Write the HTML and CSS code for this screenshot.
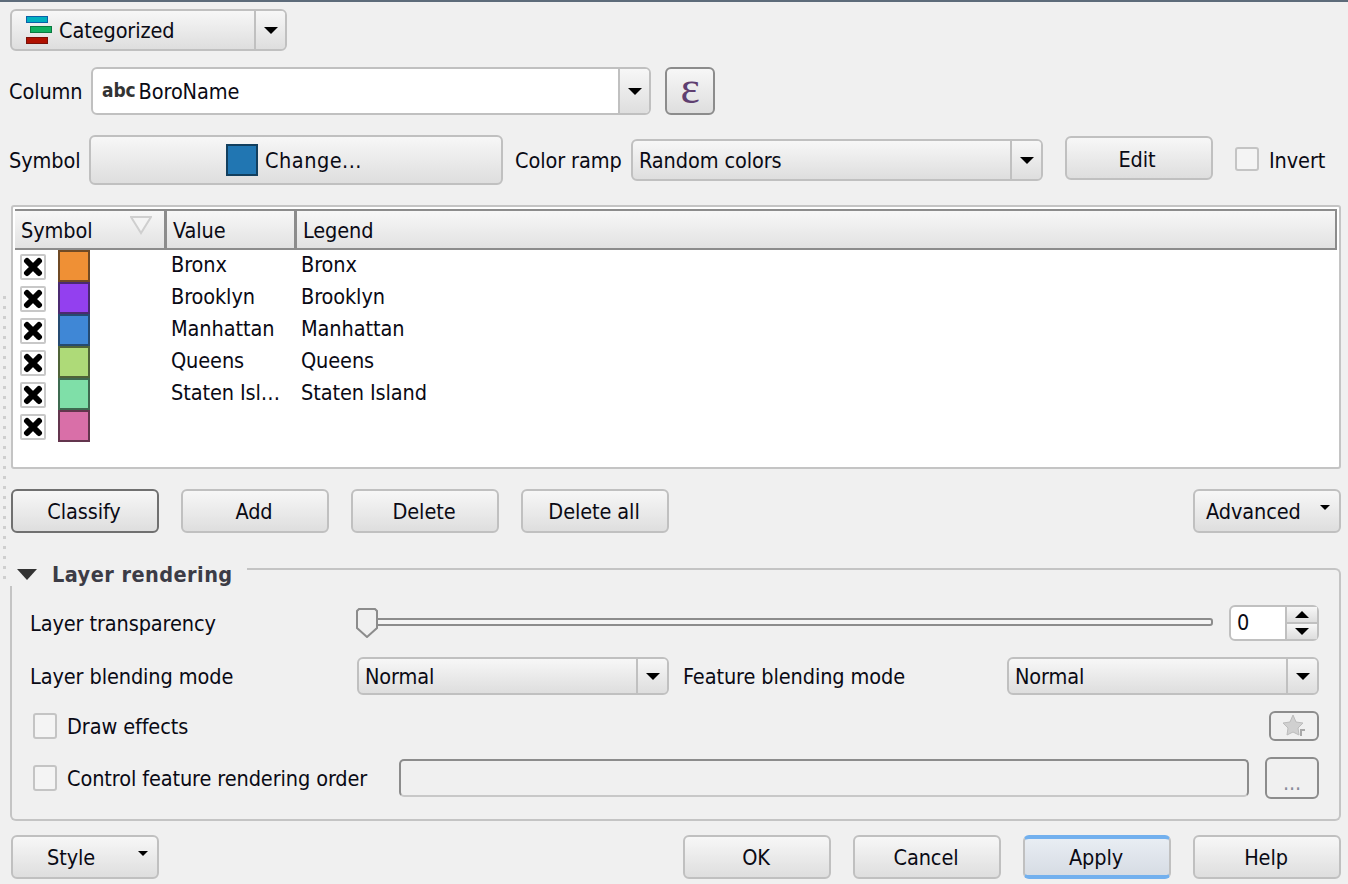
FILE: index.html
```html
<!DOCTYPE html>
<html lang="en">
<head>
<meta charset="UTF-8" />
<title>Layer Properties</title>
<link rel="stylesheet" href="styles.css">
</head>
<body>

<div class="splitter"></div>

<div class="row row-renderer">
  <div class="combo combo-renderer">
    <span class="combo-text">
      <svg class="renderer-icon" width="26" height="28" viewBox="0 0 26 28">
        <rect x="0.5" y="0.5" width="21" height="6" fill="#00b0c0" stroke="#0a5fa8"/>
        <rect x="4.5" y="10.5" width="21" height="6" fill="#10b060" stroke="#0a7a40"/>
        <rect x="0.5" y="21.5" width="21" height="6" fill="#b01000" stroke="#7a1008"/>
      </svg>
      Categorized
    </span>
    <span class="combo-arrow"><i class="arrow"></i></span>
  </div>
</div>

<div class="row row-column">
  <label class="lbl lbl-column">Column</label>
  <div class="combo combo-white combo-column">
    <span class="combo-text"><b class="abc">abc</b> BoroName</span>
    <span class="combo-arrow"><i class="arrow"></i></span>
  </div>
  <button class="btn btn-eps"><span>ε</span></button>
</div>

<div class="row row-symbol">
  <label class="lbl lbl-symbol">Symbol</label>
  <button class="btn btn-change"><i class="swatch-blue"></i>Change...</button>
  <label class="lbl lbl-ramp">Color ramp</label>
  <div class="combo combo-ramp">
    <span class="combo-text">Random colors</span>
    <span class="combo-arrow"><i class="arrow"></i></span>
  </div>
  <button class="btn btn-edit">Edit</button>
  <i class="check check-invert"></i>
  <label class="lbl lbl-invert">Invert</label>
</div>

<div class="table">
  <div class="table-head">
    <div class="th th-symbol">Symbol
      <svg class="sort" width="22" height="20" viewBox="0 0 22 20"><path d="M1 2H21L11 18Z" fill="#f4f4f4" stroke="#cfcfcf" stroke-width="2"/></svg>
    </div>
    <div class="th">Value</div>
    <div class="th th-last">Legend</div>
  </div>
  <div class="tr">
    <div class="td-sym"><span class="tick"><svg width="20" height="20" viewBox="0 0 20 20"><path d="M4 4L16 16M16 4L4 16" stroke="#000" stroke-width="6" stroke-linecap="round"/></svg></span><i class="swatch c-orange"></i></div>
    <div class="td">Bronx</div><div class="td">Bronx</div>
  </div>
  <div class="tr">
    <div class="td-sym"><span class="tick"><svg width="20" height="20" viewBox="0 0 20 20"><path d="M4 4L16 16M16 4L4 16" stroke="#000" stroke-width="6" stroke-linecap="round"/></svg></span><i class="swatch c-purple"></i></div>
    <div class="td">Brooklyn</div><div class="td">Brooklyn</div>
  </div>
  <div class="tr">
    <div class="td-sym"><span class="tick"><svg width="20" height="20" viewBox="0 0 20 20"><path d="M4 4L16 16M16 4L4 16" stroke="#000" stroke-width="6" stroke-linecap="round"/></svg></span><i class="swatch c-blue"></i></div>
    <div class="td">Manhattan</div><div class="td">Manhattan</div>
  </div>
  <div class="tr">
    <div class="td-sym"><span class="tick"><svg width="20" height="20" viewBox="0 0 20 20"><path d="M4 4L16 16M16 4L4 16" stroke="#000" stroke-width="6" stroke-linecap="round"/></svg></span><i class="swatch c-green"></i></div>
    <div class="td">Queens</div><div class="td">Queens</div>
  </div>
  <div class="tr">
    <div class="td-sym"><span class="tick"><svg width="20" height="20" viewBox="0 0 20 20"><path d="M4 4L16 16M16 4L4 16" stroke="#000" stroke-width="6" stroke-linecap="round"/></svg></span><i class="swatch c-teal"></i></div>
    <div class="td">Staten Isl…</div><div class="td">Staten Island</div>
  </div>
  <div class="tr">
    <div class="td-sym"><span class="tick"><svg width="20" height="20" viewBox="0 0 20 20"><path d="M4 4L16 16M16 4L4 16" stroke="#000" stroke-width="6" stroke-linecap="round"/></svg></span><i class="swatch c-pink"></i></div>
    <div class="td"></div><div class="td"></div>
  </div>
</div>

<div class="row row-actions">
  <button class="btn btn-wide btn-default">Classify</button>
  <button class="btn btn-wide">Add</button>
  <button class="btn btn-wide">Delete</button>
  <button class="btn btn-wide">Delete all</button>
  <button class="btn btn-wide btn-menu push-right">Advanced<i class="arrow arrow-small"></i></button>
</div>

<div class="group-title">
  <i class="arrow arrow-group"></i>
  <span class="group-name">Layer rendering</span>
  <span class="group-line"></span>
</div>
<div class="group-body">
  <div class="row row-slider">
    <label class="lbl lbl-group">Layer transparency</label>
    <div class="slider">
      <svg class="slider-handle" width="22" height="30" viewBox="0 0 22 30"><path d="M3 1H19L21 3V20L11 29L1 20V3Z" fill="#f0f0f0" stroke="#8c8c8c" stroke-width="2"/></svg>
    </div>
    <div class="spin">
      <span class="spin-value">0</span>
      <span class="spin-btns">
        <span class="spin-btn"><i class="arrow arrow-up"></i></span>
        <span class="spin-btn"><i class="arrow"></i></span>
      </span>
    </div>
  </div>
  <div class="row row-blend">
    <label class="lbl lbl-group">Layer blending mode</label>
    <div class="combo combo-blend">
      <span class="combo-text">Normal</span>
      <span class="combo-arrow"><i class="arrow"></i></span>
    </div>
    <label class="lbl lbl-feature">Feature blending mode</label>
    <div class="combo combo-blend">
      <span class="combo-text">Normal</span>
      <span class="combo-arrow"><i class="arrow"></i></span>
    </div>
  </div>
  <div class="row row-effects">
    <i class="check check-group"></i>
    <label class="lbl">Draw effects</label>
    <button class="btn btn-star push-right">
      <svg width="26" height="24" viewBox="0 0 26 24"><path d="M12 1L15 8L22 9L17 14L18 21L12 18L6 21L7 14L2 9L9 8Z" fill="#d0d0d0" stroke="#bcbcbc"/><path d="M20 22V16H24" fill="none" stroke="#a8a8a8" stroke-width="2"/></svg>
    </button>
  </div>
  <div class="row row-order">
    <i class="check check-group"></i>
    <label class="lbl lbl-order">Control feature rendering order</label>
    <div class="order-input"></div>
    <button class="btn btn-more"><span>...</span></button>
  </div>
</div>

<div class="row row-footer">
  <button class="btn btn-wide btn-menu btn-style">Style<i class="arrow arrow-small"></i></button>
  <button class="btn btn-wide push-right">OK</button>
  <button class="btn btn-wide">Cancel</button>
  <button class="btn btn-wide btn-apply">Apply</button>
  <button class="btn btn-wide">Help</button>
</div>

</body>
</html>
```

FILE: styles.css
```css
* {
  box-sizing: border-box;
}
html, body {
  height: 100%;
}
body {
  margin: 0;
  position: relative;
  overflow: hidden;
  background: #f0f0f0;
  border-top: 2px solid #5d6b7a;
  color: #0a0a14;
  font-family: "DejaVu Sans Condensed", "DejaVu Sans", sans-serif;
  font-stretch: condensed;
  font-size: 21.5px;
  letter-spacing: -0.1px;
}
i {
  display: block;
  flex: none;
}
.splitter {
  position: absolute;
  left: 3px;
  top: 294px;
  width: 3px;
  height: 286px;
  background: repeating-linear-gradient(#cfcfcf 0 3px, transparent 3px 10px);
}
.row {
  display: flex;
  align-items: center;
}
.row-renderer {
  margin: 7px 0 0 10px;
  height: 42px;
}
.row-column {
  margin: 16px 0 0 9px;
  height: 48px;
}
.row-symbol {
  margin: 20px 0 0 9px;
  height: 50px;
}
.row-actions {
  margin: 20px 7px 0 11px;
  height: 44px;
  gap: 22px;
}
.row-footer {
  margin: 14px 7px 0 11px;
  height: 44px;
  gap: 22px;
}
.push-right {
  margin-left: auto;
}
.lbl {
  display: block;
  white-space: nowrap;
}
.lbl-column {
  width: 82px;
}
.lbl-symbol {
  width: 80px;
}
.lbl-ramp {
  width: 116px;
  margin-left: 12px;
}
.lbl-invert {
  margin-left: 10px;
}

/* buttons */
.btn {
  display: flex;
  align-items: center;
  justify-content: center;
  padding: 0;
  font: inherit;
  letter-spacing: inherit;
  color: inherit;
  background: linear-gradient(#f7f7f7, #dedede);
  border: 2px solid #c0c0c0;
  border-radius: 6px;
}
.btn-wide {
  width: 148px;
  height: 44px;
  padding: 1px 2px 0 0;
}
.btn-default {
  border-color: #707070;
}
.btn-menu {
  position: relative;
  justify-content: flex-start;
  padding-left: 11px;
}
.btn-style {
  padding-left: 34px;
}
.btn-apply {
  background: linear-gradient(#e8edf3, #d6dce4);
  border-top: 4px solid #72b0ee;
  border-bottom: 4px solid #72b0ee;
}
.btn-eps {
  width: 50px;
  height: 48px;
  margin-left: 14px;
  border-color: #8c8c8c;
  color: #5f3f70;
  font-family: "Liberation Serif", serif;
  font-stretch: normal;
  font-size: 46px;
}
.btn-eps span {
  margin-top: -8px;
}
.btn-change {
  width: 414px;
  height: 50px;
  padding-right: 4px;
  letter-spacing: 0.5px;
}
.swatch-blue {
  width: 32px;
  height: 32px;
  margin-right: 7px;
  background: #2176b2;
  border: 2px solid #123f5e;
}
.btn-edit {
  width: 148px;
  height: 44px;
  margin: -4px 0 0 22px;
  padding: 2px 4px 0 0;
}
.btn-star {
  width: 50px;
  height: 30px;
  background: #f0f0f0;
  border-color: #8c8c8c;
}
.btn-more {
  width: 54px;
  height: 42px;
  background: #f0f0f0;
  border-color: #8c8c8c;
  color: #8a8a9a;
}
.btn-more span {
  margin-top: 8px;
}

/* combos */
.combo {
  display: flex;
  align-items: stretch;
  background: linear-gradient(#f7f7f7, #dedede);
  border: 2px solid #c0c0c0;
  border-radius: 6px;
}
.combo-text {
  display: flex;
  align-items: center;
  flex: 1;
  padding-left: 6px;
  white-space: nowrap;
}
.combo-arrow {
  display: flex;
  align-items: center;
  justify-content: center;
  width: 31px;
  border-left: 2px solid #c0c0c0;
  background: linear-gradient(#f7f7f7, #dedede);
  border-radius: 0 4px 4px 0;
}
.combo-renderer {
  width: 277px;
  height: 42px;
}
.combo-renderer .combo-text {
  padding-left: 14px;
}
.renderer-icon {
  margin-right: 7px;
}
.combo-white {
  background: #fff;
}
.combo-column {
  width: 560px;
  height: 48px;
}
.combo-column .combo-text {
  padding-left: 9px;
}
.abc {
  margin-top: -3px;
  margin-right: 3px;
  font-size: 19px;
  color: #333;
}
.combo-ramp {
  width: 412px;
  height: 42px;
}
.combo-blend {
  width: 312px;
  height: 38px;
}
.arrow {
  width: 0;
  height: 0;
  border-left: 7px solid transparent;
  border-right: 7px solid transparent;
  border-top: 7px solid #000;
}
.arrow-small {
  position: absolute;
  right: 9px;
  top: 14px;
  border-left-width: 5px;
  border-right-width: 5px;
  border-top-width: 5px;
}
.arrow-up {
  border-top: 0;
  border-bottom: 7px solid #000;
}
.arrow-group {
  margin-left: 7px;
  border-left-width: 10px;
  border-right-width: 10px;
  border-top: 11px solid #333;
}

/* checkboxes */
.check {
  width: 24px;
  height: 26px;
  background: #f4f4f4;
  border: 2px solid #c4c4c4;
  border-radius: 3px;
}
.check-invert {
  height: 24px;
  margin: -2px 0 0 22px;
}
.check-group {
  margin: 0 10px 0 3px;
}

/* table */
.table {
  width: 1330px;
  height: 264px;
  margin: 20px 0 0 11px;
  padding: 2px;
  background: #fff;
  border: 2px solid #c4c4c4;
  border-radius: 3px;
  overflow: hidden;
}
.table-head {
  display: grid;
  grid-template-columns: 152px 130px 1fr;
  height: 41px;
  background: linear-gradient(#f7f7f7, #e2e2e2);
  border-top: 2px solid #8c8c8c;
  border-bottom: 2px solid #8c8c8c;
}
.th {
  position: relative;
  padding: 7px 0 0 6px;
  border-right: 3px solid #8c8c8c;
}
.th-last {
  border-right: 2px solid #8c8c8c;
}
.sort {
  position: absolute;
  right: 12px;
  top: 4px;
}
.tr {
  display: grid;
  grid-template-columns: 152px 130px 1fr;
  height: 32px;
}
.td-sym {
  display: flex;
  padding-left: 5px;
}
.td {
  padding: 1px 0 0 4px;
  line-height: 28px;
  white-space: nowrap;
}
.tick {
  display: flex;
  align-items: center;
  justify-content: center;
  width: 26px;
  height: 26px;
  margin-top: 4px;
  border: 2px solid #c8c8c8;
  border-radius: 2px;
}
.swatch {
  width: 32px;
  height: 32px;
  margin-left: 12px;
  border: 2px solid;
}
.c-orange { background: #ef9035; border-color: #6f4a25; }
.c-purple { background: #9340ef; border-color: #4a2a70; }
.c-blue { background: #3f87d6; border-color: #254a70; }
.c-green { background: #aeda78; border-color: #4f6338; }
.c-teal { background: #7fdfa8; border-color: #3e6a50; }
.c-pink { background: #d96fa8; border-color: #63354d; }

/* layer rendering group */
.group-title {
  display: flex;
  height: 24px;
  margin: 29px 7px 0 10px;
}
.group-title .arrow-group {
  margin-top: 7px;
}
.group-name {
  margin-left: 15px;
  padding: 1px 14px 0 0;
  font-weight: bold;
  letter-spacing: 0.45px;
  color: #3c3c46;
  white-space: nowrap;
  line-height: 24px;
}
.group-line {
  flex: 1;
  margin-top: 6px;
  border-top: 2px solid #c4c4c4;
  border-right: 2px solid #c4c4c4;
  border-radius: 0 6px 0 0;
}
.group-body {
  height: 235px;
  margin: 0 7px 0 10px;
  padding: 19px 20px 0 18px;
  border: 2px solid #c4c4c4;
  border-top: 0;
  border-radius: 0 0 6px 6px;
}
.lbl-group {
  width: 327px;
}
.row-slider {
  height: 36px;
}
.row-slider .lbl-group {
  padding-top: 1px;
}
.slider {
  position: relative;
  flex: 1;
  height: 8px;
  margin: -2px 16px 0 0;
  background: #f4f4f4;
  border: 2px solid #8c8c8c;
  border-radius: 3px;
}
.slider-handle {
  position: absolute;
  left: -3px;
  top: -12px;
}
.spin {
  display: flex;
  width: 90px;
  height: 36px;
  background: #fff;
  border: 2px solid #c0c0c0;
  border-radius: 6px;
}
.spin-value {
  flex: 1;
  padding-left: 6px;
  line-height: 32px;
}
.spin-btns {
  display: flex;
  flex-direction: column;
  width: 32px;
  border-left: 2px solid #c0c0c0;
}
.spin-btn {
  display: flex;
  flex: 1;
  align-items: center;
  justify-content: center;
  background: linear-gradient(#f7f7f7, #dedede);
}
.spin-btn + .spin-btn {
  border-top: 2px solid #c0c0c0;
}
.row-blend {
  height: 38px;
  margin-top: 16px;
}
.lbl-feature {
  width: 324px;
  margin-left: 14px;
}
.row-effects {
  height: 30px;
  margin-top: 16px;
}
.row-order {
  height: 42px;
  margin-top: 16px;
}
.lbl-order {
  width: 332px;
}
.order-input {
  flex: 1;
  height: 38px;
  margin-right: 16px;
  background: #f0f0f0;
  border: 2px solid #8c8c8c;
  border-bottom-color: #c8c8c8;
  border-radius: 5px;
}
```
